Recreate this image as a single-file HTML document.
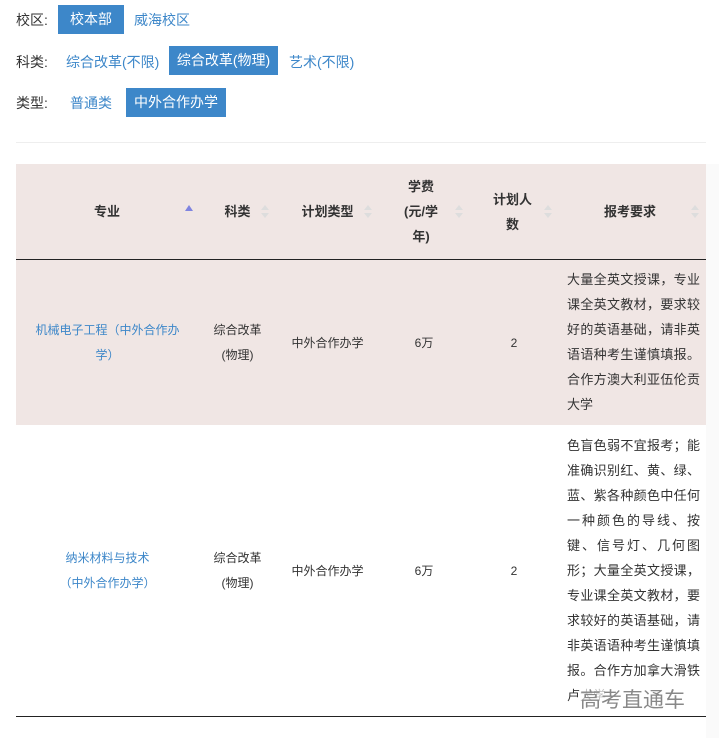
<!DOCTYPE html>
<html><head><meta charset="utf-8"><style>
body{margin:0;width:719px;height:738px;background:#fff;font-family:"Liberation Sans","Noto Sans CJK SC",sans-serif;position:relative;overflow:hidden;color:#333}
.a{position:absolute;white-space:nowrap}
.lbl{font-size:14px;color:#333}
.lk{font-size:14px;color:#3d87c9}
.btn{font-size:14px;color:#fff;background:#3d87c9;text-align:center;line-height:29px;height:29px}
.hd{font-size:13px;font-weight:bold;color:#333;text-align:center;line-height:25px;white-space:normal}
.c{font-size:12px;text-align:center;line-height:25px;white-space:normal;color:#333}
.arr{position:absolute;width:0;height:0;border-left:4px solid transparent;border-right:4px solid transparent}
.up{border-bottom:5px solid #ddd}.dn{border-top:5px solid #ddd}
.req{font-size:13px;line-height:25px;text-align:justify;white-space:normal;color:#333}
</style></head><body>
<div class="a lbl" style="left:16px;top:10px">校区:</div>
<div class="a btn" style="left:58px;top:5px;width:66px">校本部</div>
<div class="a lk" style="left:134px;top:10px">威海校区</div>
<div class="a lbl" style="left:16px;top:52px">科类:</div>
<div class="a lk" style="left:66px;top:52px">综合改革(不限)</div>
<div class="a btn" style="left:169px;top:46px;width:109px">综合改革(物理)</div>
<div class="a lk" style="left:289px;top:52px">艺术(不限)</div>
<div class="a lbl" style="left:16px;top:93px">类型:</div>
<div class="a lk" style="left:70px;top:93px">普通类</div>
<div class="a btn" style="left:126px;top:88px;width:100px">中外合作办学</div>
<div class="a" style="left:16px;top:142px;width:690px;height:1px;background:#eee"></div>

<div class="a" style="left:16px;top:164px;width:690px;height:95px;background:#f0e6e4"></div>
<div class="a" style="left:16px;top:259px;width:690px;height:1px;background:#222"></div>
<div class="a" style="left:16px;top:260px;width:690px;height:165px;background:#f0e6e4"></div>
<div class="a" style="left:16px;top:716px;width:690px;height:1px;background:#222"></div>
<div class="a" style="left:706px;top:164px;width:13px;height:574px;background:#fafafa"></div>

<div class="a hd" style="left:16px;top:199px;width:182px">专业</div>
<div class="arr" style="left:185px;top:205px;border-bottom:6px solid #7f84e0"></div>
<div class="a hd" style="left:198px;top:199px;width:79px">科类</div>
<div class="arr up" style="left:261px;top:205px"></div><div class="arr dn" style="left:261px;top:213px"></div>
<div class="a hd" style="left:277px;top:199px;width:101px">计划类型</div>
<div class="arr up" style="left:364px;top:205px"></div><div class="arr dn" style="left:364px;top:213px"></div>
<div class="a hd" style="left:395px;top:174px;width:52px">学费<br>(元/学<br>年)</div>
<div class="arr up" style="left:455px;top:205px"></div><div class="arr dn" style="left:455px;top:213px"></div>
<div class="a hd" style="left:485px;top:187px;width:55px">计划人<br>数</div>
<div class="arr up" style="left:544px;top:205px"></div><div class="arr dn" style="left:544px;top:213px"></div>
<div class="a hd" style="left:558px;top:199px;width:144px">报考要求</div>
<div class="arr up" style="left:691px;top:205px"></div><div class="arr dn" style="left:691px;top:213px"></div>

<div class="a c" style="left:30px;top:318px;width:155px;color:#3d87c9">机械电子工程（中外合作办<br>学）</div>
<div class="a c" style="left:198px;top:318px;width:79px">综合改革<br>(物理)</div>
<div class="a c" style="left:277px;top:331px;width:101px">中外合作办学</div>
<div class="a c" style="left:378px;top:331px;width:92px">6万</div>
<div class="a c" style="left:470px;top:331px;width:88px">2</div>
<div class="a req" style="left:567px;top:267px;width:133px">大量全英文授课，专业课全英文教材，要求较好的英语基础，请非英语语种考生谨慎填报。合作方澳大利亚伍伦贡大学</div>

<div class="a c" style="left:30px;top:546px;width:155px;color:#3d87c9">纳米材料与技术<br>（中外合作办学）</div>
<div class="a c" style="left:198px;top:546px;width:79px">综合改革<br>(物理)</div>
<div class="a c" style="left:277px;top:559px;width:101px">中外合作办学</div>
<div class="a c" style="left:378px;top:559px;width:92px">6万</div>
<div class="a c" style="left:470px;top:559px;width:88px">2</div>
<div class="a req" style="left:567px;top:433px;width:133px">色盲色弱不宜报考；能准确识别红、黄、绿、蓝、紫各种颜色中任何一种颜色的导线、按键、信号灯、几何图形；大量全英文授课，专业课全英文教材，要求较好的英语基础，请非英语语种考生谨慎填报。合作方加拿大滑铁卢大学</div>
<div class="a" style="left:580px;top:684px;font-size:21px;color:#888;background:rgba(255,255,255,0.7)">高考直通车</div>
</body></html>
